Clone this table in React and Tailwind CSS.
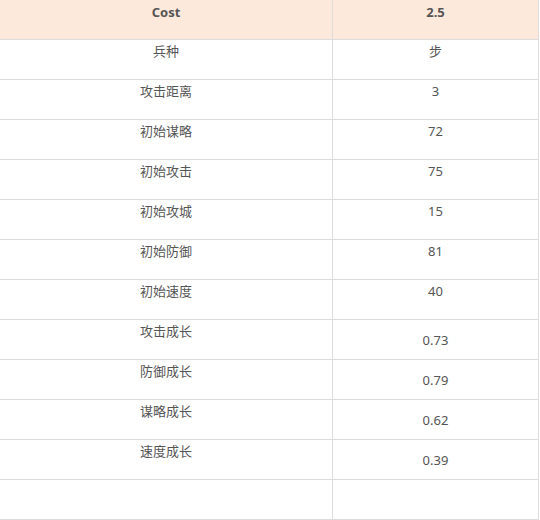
import React from 'react';

const stats = [
  { label: '兵种', value: '步' },
  { label: '攻击距离', value: '3' },
  { label: '初始谋略', value: '72' },
  { label: '初始攻击', value: '75' },
  { label: '初始攻城', value: '15' },
  { label: '初始防御', value: '81' },
  { label: '初始速度', value: '40' },
  { label: '攻击成长', value: '0.73', growth: true },
  { label: '防御成长', value: '0.79', growth: true },
  { label: '谋略成长', value: '0.62', growth: true },
  { label: '速度成长', value: '0.39', growth: true },
  { label: '', value: '' }
];

export default function App() {
  return (
    <div
      className="w-[540px] h-[520px] bg-white overflow-hidden text-[13px] text-[#555]"
      style={{ fontFamily: '"Noto Sans", "Noto Sans CJK SC", sans-serif' }}
    >
      <div className="w-[539px] border-r border-[#dcdcdc]">
        <div className="grid grid-cols-[333px_1fr] h-[40px] bg-[#fde9dc] border-b border-[#dcdcdc] font-bold">
          <div className="border-r border-[#dcdcdc] text-center pt-[3px] leading-[18px]">Cost</div>
          <div className="text-center pt-[3px] leading-[18px]">2.5</div>
        </div>
        {stats.map((row, i) => (
          <div key={i} className="grid grid-cols-[333px_1fr] h-[40px] border-b border-[#dcdcdc]">
            <div className="border-r border-[#dcdcdc] text-center pt-[2px] leading-[18px]">{row.label}</div>
            {row.growth ? (
              <div className="flex items-center justify-center leading-[18px]">{row.value}</div>
            ) : (
              <div className="text-center pt-[2px] leading-[18px]">{row.value}</div>
            )}
          </div>
        ))}
      </div>
    </div>
  );
}
